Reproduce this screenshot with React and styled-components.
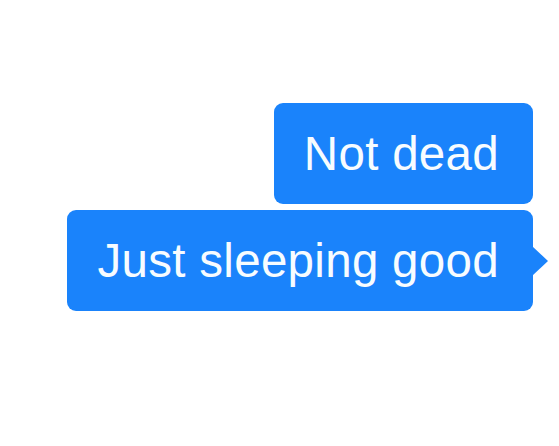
import React from "react";
import styled, { createGlobalStyle } from "styled-components";

const GlobalStyle = createGlobalStyle`
  html, body {
    margin: 0;
    padding: 0;
    background: #ffffff;
  }
  body {
    font-family: "Liberation Sans", Arial, sans-serif;
  }
`;

const Thread = styled.div`
  width: 559px;
  height: 446px;
  box-sizing: border-box;
  padding: 103px 26px 0 0;
  display: flex;
  flex-direction: column;
  align-items: flex-end;
  gap: 6px;
  background: #ffffff;
`;

const Bubble = styled.div`
  position: relative;
  box-sizing: border-box;
  height: 101px;
  display: flex;
  align-items: center;
  padding: 0 34px 0 ${(p) => p.$padLeft || 31}px;
  background: #1a83fb;
  border-radius: 9px;
  color: #f7fcff;
  font-size: 47.5px;
  letter-spacing: 0.3px;
  line-height: 1;
  white-space: nowrap;

  ${(p) =>
    p.$tail &&
    `
    &::after {
      content: "";
      position: absolute;
      right: -15px;
      top: 50%;
      margin-top: -15px;
      border-top: 15px solid transparent;
      border-bottom: 15px solid transparent;
      border-left: 16px solid #1a83fb;
    }
  `}
`;

export default function App() {
  return (
    <>
      <GlobalStyle />
      <Thread>
        <Bubble $padLeft={30}>Not dead</Bubble>
        <Bubble $padLeft={30} $tail>
          Just sleeping good
        </Bubble>
      </Thread>
    </>
  );
}
